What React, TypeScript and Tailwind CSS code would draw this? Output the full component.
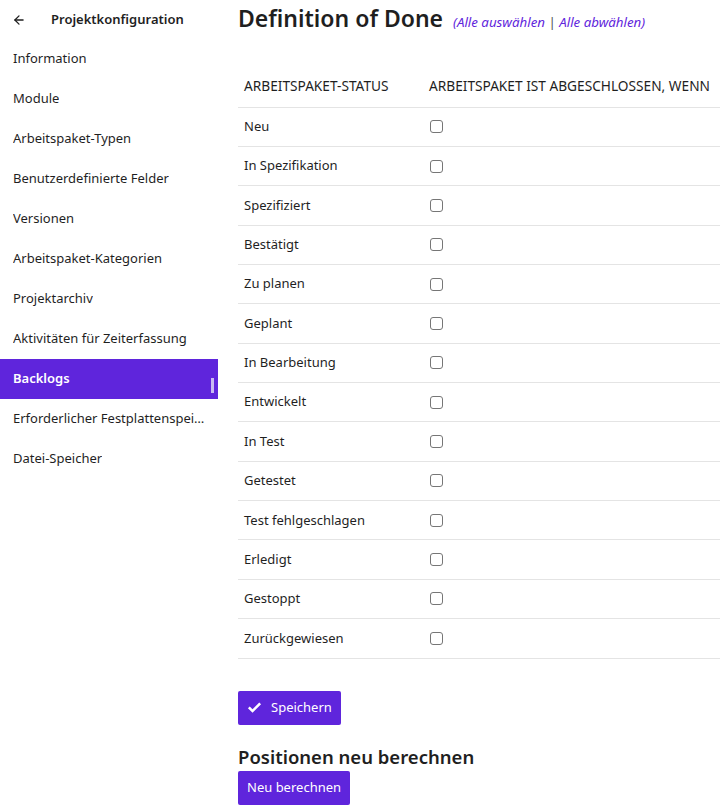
import { ArrowLeft } from "lucide-react";

const menu = [
  "Information",
  "Module",
  "Arbeitspaket-Typen",
  "Benutzerdefinierte Felder",
  "Versionen",
  "Arbeitspaket-Kategorien",
  "Projektarchiv",
  "Aktivitäten für Zeiterfassung",
  "Backlogs",
  "Erforderlicher Festplattenspeicher",
  "Datei-Speicher",
];

const statuses = [
  "Neu",
  "In Spezifikation",
  "Spezifiziert",
  "Bestätigt",
  "Zu planen",
  "Geplant",
  "In Bearbeitung",
  "Entwickelt",
  "In Test",
  "Getestet",
  "Test fehlgeschlagen",
  "Erledigt",
  "Gestoppt",
  "Zurückgewiesen",
];

function Sidebar() {
  return (
    <aside className="w-[218px] shrink-0 pt-[1px]">
      <div className="flex h-[38px] items-center text-[13px] font-semibold text-[#1f1f1f]">
        <ArrowLeft className="ml-[12px] h-[14px] w-[14px]" strokeWidth={2.2} />
        <span className="ml-[25px]">Projektkonfiguration</span>
      </div>
      <nav>
        {menu.map((item) => {
          const active = item === "Backlogs";
          return (
            <div
              key={item}
              className={`relative flex h-[40px] items-center pl-[13px] pr-[12px] text-[13px] ${
                active ? "bg-[#5f25dc] font-semibold text-white" : "text-[#1f1f1f]"
              }`}
            >
              <span className="truncate">{item}</span>
              {active ? (
                <span className="absolute right-[4px] top-[19px] h-[15px] w-[3px] bg-[#c9b8f2]" />
              ) : null}
            </div>
          );
        })}
      </nav>
    </aside>
  );
}

export default function App() {
  return (
    <div className="flex h-[808px] w-[720px] overflow-hidden bg-white font-['Noto_Sans',sans-serif] text-[#1f1f1f]">
      <Sidebar />
      <main className="ml-[20px] min-w-0 flex-1">
        <div className="flex items-baseline gap-[10px] pt-[2px]">
          <h1 className="text-[23px] font-semibold leading-[32px] text-[#1f1f1f]">Definition of Done</h1>
          <span className="text-[13.3px] italic text-[#5f25dc]">
            (Alle auswählen <span className="not-italic text-[#555]">|</span> Alle abwählen)
          </span>
        </div>

        <table className="mt-[34px] w-[490px] table-fixed border-collapse text-[13px]">
          <thead>
            <tr className="h-[39px] border-b border-[#e4e4e4]">
              <th className="w-[185px] px-[6px] pb-[2px] text-left text-[13.7px] font-normal">ARBEITSPAKET-STATUS</th>
              <th className="whitespace-nowrap px-[6px] pb-[2px] text-left text-[13.7px] font-normal">ARBEITSPAKET IST ABGESCHLOSSEN, WENN</th>
            </tr>
          </thead>
          <tbody>
            {statuses.map((s) => (
              <tr key={s} className="h-[39.36px] border-b border-[#e4e4e4]">
                <td className="px-[6px]">{s}</td>
                <td className="px-[6px]">
                  <span className="ml-[1px] block h-[13px] w-[13px] rounded-[3px] border border-[#767676]" />
                </td>
              </tr>
            ))}
          </tbody>
        </table>

        <button className="mt-[32px] flex h-[34px] items-center gap-[9px] rounded-[2px] bg-[#5f25dc] pl-[9px] pr-[9px] text-[13px] text-white">
          <svg viewBox="0 0 16 16" className="h-[15px] w-[15px]" fill="currentColor">
            <path d="M1 8.8 2.9 6.9 5.9 9.9 13.1 2.6 15 4.5 5.9 13.7Z" />
          </svg>
          Speichern
        </button>

        <h2 className="mt-[19px] text-[18.5px] font-semibold leading-[26px]">Positionen neu berechnen</h2>
        <button className="mt-[1px] flex h-[34px] items-center rounded-[2px] bg-[#5f25dc] px-[9px] text-[13px] text-white">
          Neu berechnen
        </button>
      </main>
    </div>
  );
}
